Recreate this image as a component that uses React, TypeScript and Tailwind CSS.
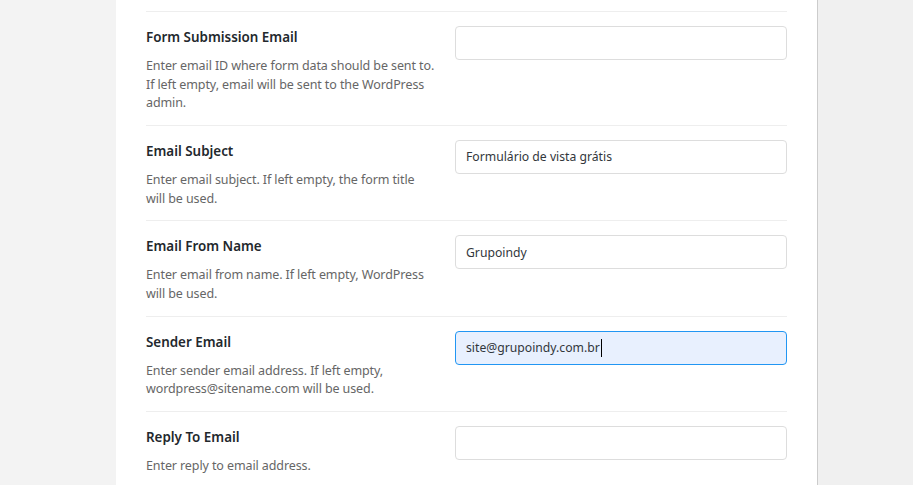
import React from "react";

type Row = { label: string; desc: string[]; value?: string; focused?: boolean };

const rows: Row[] = [
  {
    label: "Form Submission Email",
    desc: [
      "Enter email ID where form data should be sent to.",
      "If left empty, email will be sent to the WordPress",
      "admin.",
    ],
  },
  {
    label: "Email Subject",
    desc: ["Enter email subject. If left empty, the form title", "will be used."],
    value: "Formulário de vista grátis",
  },
  {
    label: "Email From Name",
    desc: ["Enter email from name. If left empty, WordPress", "will be used."],
    value: "Grupoindy",
  },
  {
    label: "Sender Email",
    desc: ["Enter sender email address. If left empty,", "wordpress@sitename.com will be used."],
    value: "site@grupoindy.com.br",
    focused: true,
  },
  {
    label: "Reply To Email",
    desc: ["Enter reply to email address."],
  },
];

export default function App() {
  return (
    <div
      className="flex h-[485px] w-[913px] overflow-hidden bg-[#f3f3f3]"
      style={{ fontFamily: '"Noto Sans", "Open Sans", sans-serif' }}
    >
      <div className="w-[116px] shrink-0 bg-[#f3f3f3]" />
      <div className="w-[702px] shrink-0 border-r border-[#cccccc] bg-white px-[30px] pt-[11px]">
        {rows.map((r) => (
          <div
            key={r.label}
            className="grid grid-cols-[289px_1fr] gap-x-5 border-t border-[#eeeeee] pb-[12px] pt-[14px]"
          >
            <div>
              <div className="text-[13.4px] font-semibold leading-[22px] text-[#23282d]">{r.label}</div>
              <div className="mt-[9px] text-[12.5px] leading-[18.67px] tracking-[-0.1px] text-[#666666]">
                {r.desc.map((d, i) => (
                  <div key={i} className="whitespace-nowrap">
                    {d}
                  </div>
                ))}
              </div>
            </div>
            <div>
              <div
                className={
                  r.focused
                    ? "flex h-[34px] items-center rounded-[4px] border border-[#2196f3] bg-[#e8f0fe] px-[10px] pt-px text-[12.2px] text-[#32373c]"
                    : "flex h-[34px] items-center rounded-[4px] border border-[#dddddd] bg-white px-[10px] pt-px text-[12.2px] text-[#32373c]"
                }
              >
                {r.value && <span>{r.value}</span>}
                {r.focused && <span className="ml-[1px] inline-block h-[18px] w-px bg-black" />}
              </div>
            </div>
          </div>
        ))}
      </div>
      <div className="flex-1 bg-[#f0f0f0]" />
    </div>
  );
}
